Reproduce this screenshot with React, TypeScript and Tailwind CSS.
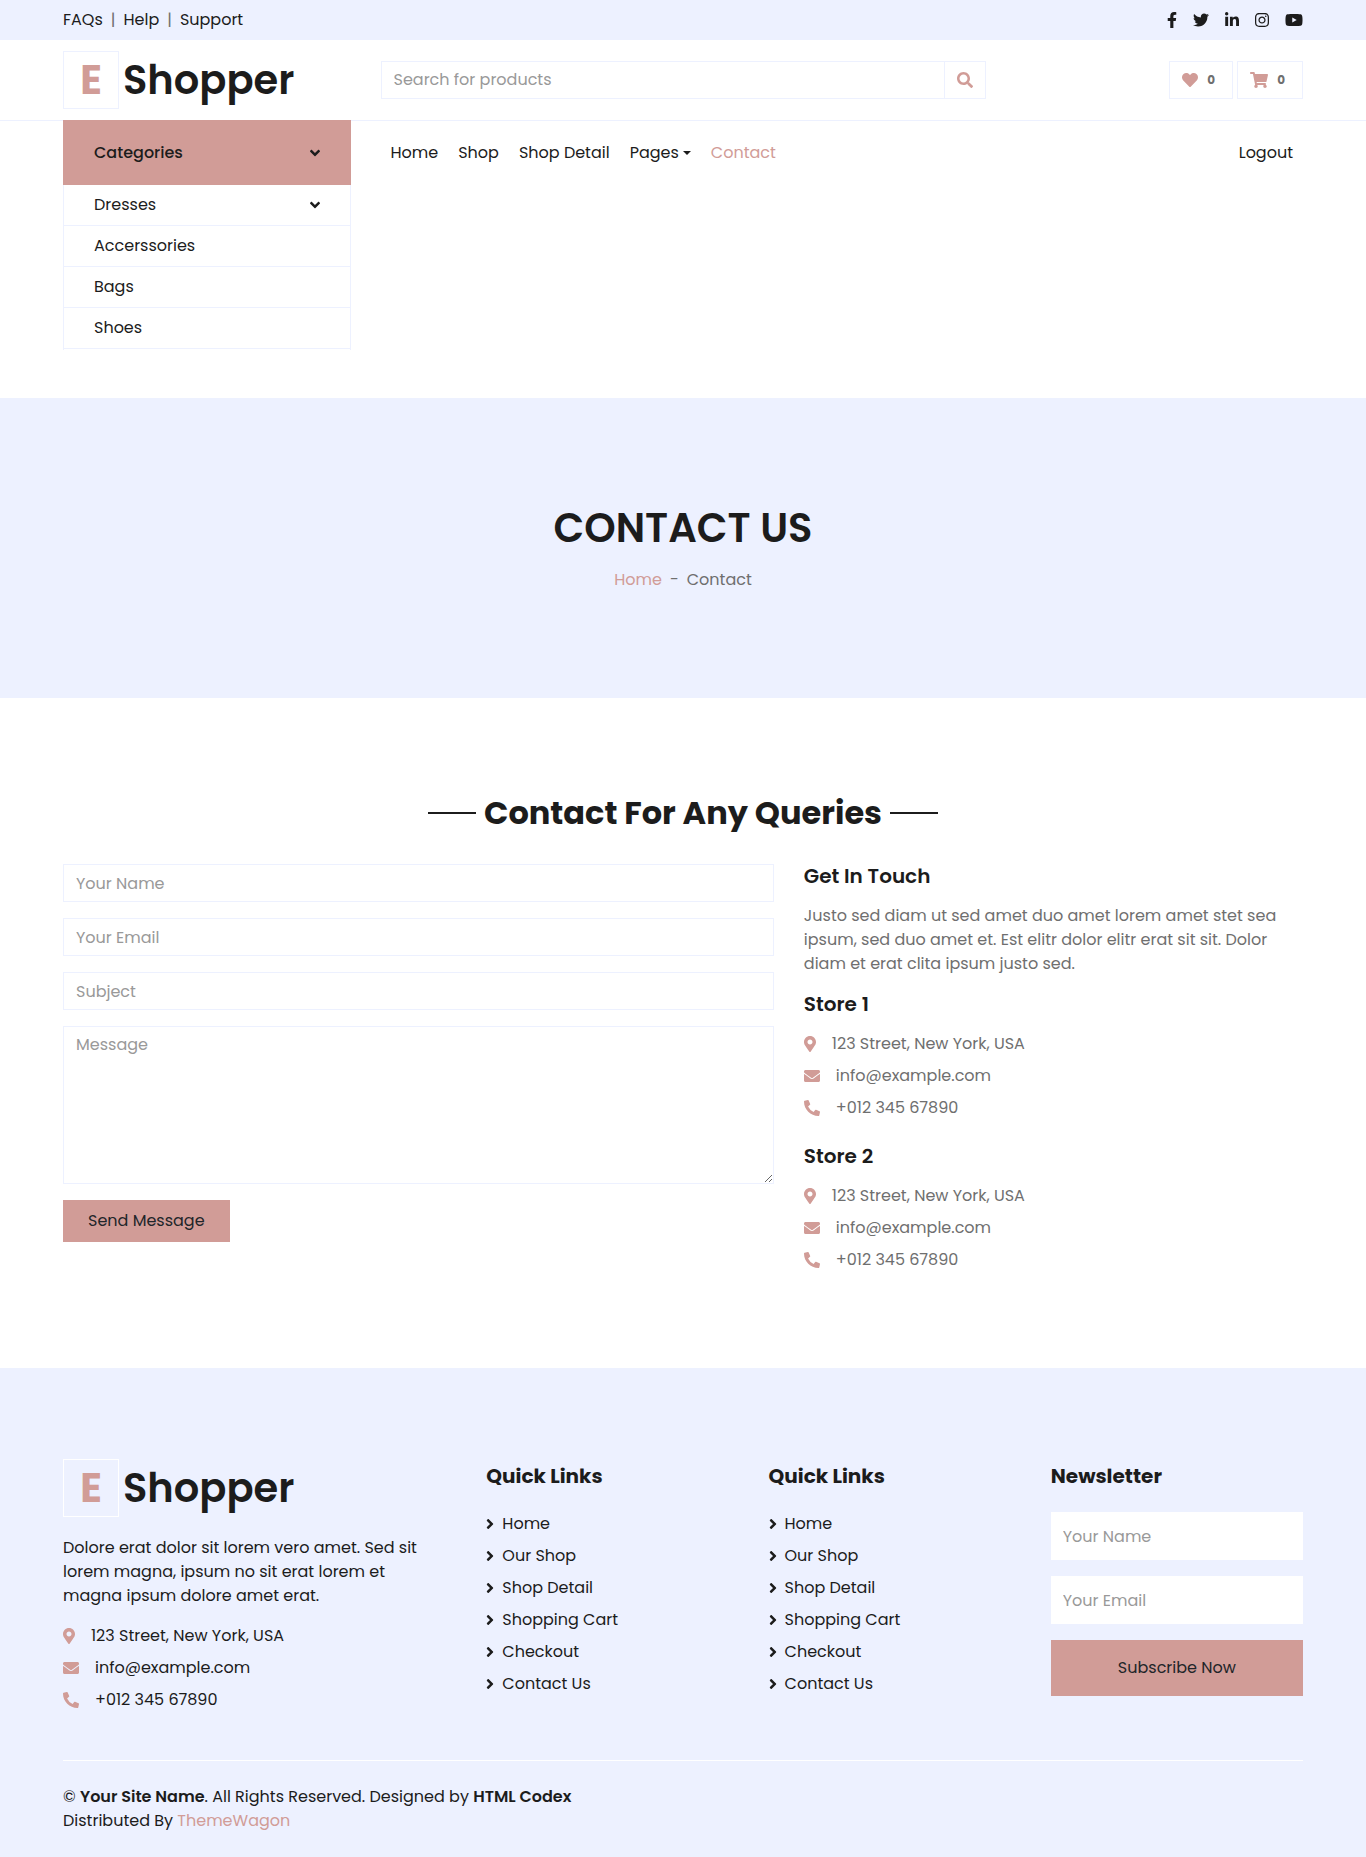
import type { ReactNode } from 'react';
import {
  FaAngleDown,
  FaAngleRight,
  FaEnvelope,
  FaFacebookF,
  FaHeart,
  FaInstagram,
  FaLinkedinIn,
  FaMapMarkerAlt,
  FaPhoneAlt,
  FaSearch,
  FaShoppingCart,
  FaTwitter,
  FaYoutube,
} from 'react-icons/fa';

const socials = [
  { label: 'Facebook', Icon: FaFacebookF, size: 'h-4 w-[10px]' },
  { label: 'Twitter', Icon: FaTwitter, size: 'h-4 w-4' },
  { label: 'LinkedIn', Icon: FaLinkedinIn, size: 'h-4 w-[14px]' },
  { label: 'Instagram', Icon: FaInstagram, size: 'h-4 w-[14px]' },
  { label: 'YouTube', Icon: FaYoutube, size: 'h-4 w-[18px]' },
];

const quickLinks = ['Home', 'Our Shop', 'Shop Detail', 'Shopping Cart', 'Checkout', 'Contact Us'];

const contactField =
  'block h-[38px] w-full border border-[#edf1ff] bg-white px-3 text-[#495057] placeholder:text-[#999999] outline-none';
const newsletterField =
  'block h-12 w-full bg-white px-3 text-[#495057] placeholder:text-[#999999] outline-none';

function Logo({ boxBorder }: { boxBorder: string }) {
  return (
    <a href="#" className="flex h-12 items-center gap-1 text-[40px] leading-none font-semibold">
      <span
        className={`flex h-[58px] w-14 shrink-0 items-center justify-center border font-bold text-[#d19c97] ${boxBorder}`}
      >
        E
      </span>
      Shopper
    </a>
  );
}

function ContactList() {
  return (
    <ul className="flex flex-col gap-2">
      <li className="flex items-center gap-4">
        <FaMapMarkerAlt className="h-4 w-3 text-[#d19c97]" />
        123 Street, New York, USA
      </li>
      <li className="flex items-center gap-4">
        <FaEnvelope className="h-4 w-4 text-[#d19c97]" />
        info@example.com
      </li>
      <li className="flex items-center gap-4">
        <FaPhoneAlt className="h-4 w-4 text-[#d19c97]" />
        +012 345 67890
      </li>
    </ul>
  );
}

function SubHeading({ children }: { children: ReactNode }) {
  return <h3 className="mb-4 text-xl leading-6 font-semibold text-[#1c1c1c]">{children}</h3>;
}

function QuickLinks() {
  return (
    <nav aria-label="Quick links">
      <h2 className="mb-6 text-xl leading-6 font-bold">Quick Links</h2>
      <ul className="flex flex-col gap-2">
        {quickLinks.map((label) => (
          <li key={label}>
            <a href="#" className="flex items-center gap-2">
              <FaAngleRight className="h-4 w-2" />
              {label}
            </a>
          </li>
        ))}
      </ul>
    </nav>
  );
}

function TopBar() {
  return (
    <div className="flex items-center justify-between bg-[#edf1ff] px-[63px] py-2 text-[#1c1c1c]">
      <div className="flex">
        <a href="#">FAQs</a>
        <span className="px-2 text-[#6f6f6f]">|</span>
        <a href="#">Help</a>
        <span className="px-2 text-[#6f6f6f]">|</span>
        <a href="#">Support</a>
      </div>
      <div className="flex items-center gap-4">
        {socials.map(({ label, Icon, size }) => (
          <a key={label} href="#" aria-label={label}>
            <Icon className={size} />
          </a>
        ))}
      </div>
    </div>
  );
}

function Header() {
  return (
    <header className="grid grid-cols-12 items-center gap-x-[30px] px-[63px] py-4">
      <div className="col-span-3 text-[#1c1c1c]">
        <Logo boxBorder="border-[#edf1ff]" />
      </div>
      <form className="col-span-6 flex h-[38px]">
        <input
          type="text"
          aria-label="Search for products"
          placeholder="Search for products"
          className="min-w-0 flex-1 border border-[#edf1ff] px-3 placeholder:text-[#999999] outline-none"
        />
        <button
          type="button"
          aria-label="Search"
          className="flex w-[41px] items-center justify-center border border-l-0 border-[#edf1ff] text-[#d19c97]"
        >
          <FaSearch className="h-4 w-4" />
        </button>
      </form>
      <div className="col-span-3 flex justify-end gap-1 text-xs font-bold">
        <a
          href="#"
          aria-label="Wishlist"
          className="flex h-[38px] items-center gap-[9px] border border-[#edf1ff] pr-[17px] pl-3"
        >
          <FaHeart className="h-4 w-4 text-[#d19c97]" />0
        </a>
        <a
          href="#"
          aria-label="Cart"
          className="flex h-[38px] items-center gap-[9px] border border-[#edf1ff] pr-[17px] pl-3"
        >
          <FaShoppingCart className="h-4 w-[18px] text-[#d19c97]" />0
        </a>
      </div>
    </header>
  );
}

function NavSection() {
  return (
    <section className="border-t border-[#edf1ff] px-[63px] text-[#1c1c1c]">
      <div className="mb-12 grid grid-cols-12 items-start gap-x-[30px]">
        <div className="col-span-3 -mt-px">
          <button
            type="button"
            className="flex h-[65px] w-full items-center justify-between bg-[#d19c97] px-[31px] font-medium"
          >
            Categories
            <FaAngleDown className="h-4 w-[10px]" />
          </button>
          <ul className="border-x border-[#edf1ff] pb-px">
            <li className="border-b border-[#edf1ff]">
              <a href="#" className="flex h-10 items-center justify-between px-[30px]">
                Dresses
                <FaAngleDown className="h-4 w-[10px]" />
              </a>
            </li>
            {['Accerssories', 'Bags', 'Shoes'].map((label) => (
              <li key={label} className="border-b border-[#edf1ff]">
                <a href="#" className="flex h-10 items-center px-[30px]">
                  {label}
                </a>
              </li>
            ))}
          </ul>
        </div>
        <nav className="col-span-9 flex h-16 items-center justify-between px-[10px]">
          <div className="flex gap-5">
            <a href="#">Home</a>
            <a href="#">Shop</a>
            <a href="#">Shop Detail</a>
            <a href="#" className="flex items-center gap-1">
              Pages
              <span className="border-x-4 border-t-4 border-x-transparent border-t-[#1c1c1c]" />
            </a>
            <a href="#" className="text-[#d19c97]">
              Contact
            </a>
          </div>
          <a href="#">Logout</a>
        </nav>
      </div>
    </section>
  );
}

function Hero() {
  return (
    <section className="flex min-h-[300px] flex-col items-center justify-center bg-[#edf1ff]">
      <h1 className="mb-4 text-[40px] leading-12 font-semibold text-[#1c1c1c] uppercase">Contact Us</h1>
      <div className="flex gap-2">
        <a href="#" className="text-[#d19c97]">
          Home
        </a>
        <span>-</span>
        <span>Contact</span>
      </div>
    </section>
  );
}

function ContactSection() {
  return (
    <main className="px-[63px] pt-24 pb-24">
      <h2 className="mb-8 flex items-center justify-center gap-2 text-[32px] leading-[38px] font-bold text-[#1c1c1c]">
        <span className="h-0.5 w-12 bg-[#1c1c1c]" />
        Contact For Any Queries
        <span className="h-0.5 w-12 bg-[#1c1c1c]" />
      </h2>
      <div className="grid grid-cols-12 items-start gap-x-[30px]">
        <form className="col-span-7 flex flex-col gap-4">
          <input type="text" aria-label="Your Name" placeholder="Your Name" className={contactField} />
          <input type="email" aria-label="Your Email" placeholder="Your Email" className={contactField} />
          <input type="text" aria-label="Subject" placeholder="Subject" className={contactField} />
          <textarea
            aria-label="Message"
            placeholder="Message"
            className="block h-[158px] w-full resize-y border border-[#edf1ff] px-3 py-1.5 text-[#495057] placeholder:text-[#999999] outline-none"
          />
          <button type="button" className="h-[42px] self-start bg-[#d19c97] px-[25px] text-[#212529]">
            Send Message
          </button>
        </form>
        <div className="col-span-5">
          <SubHeading>Get In Touch</SubHeading>
          <p className="mb-4">
            Justo sed diam ut sed amet duo amet lorem amet stet sea ipsum, sed duo amet et. Est elitr dolor
            elitr erat sit sit. Dolor diam et erat clita ipsum justo sed.
          </p>
          <SubHeading>Store 1</SubHeading>
          <div className="mb-6">
            <ContactList />
          </div>
          <SubHeading>Store 2</SubHeading>
          <ContactList />
        </div>
      </div>
    </main>
  );
}

function Footer() {
  return (
    <footer className="bg-[#edf1ff] px-[63px] pt-24 text-[#1c1c1c]">
      <div className="grid grid-cols-12 items-start gap-x-[30px] pb-12">
        <div className="col-span-4">
          <Logo boxBorder="border-white" />
          <p className="mt-6 mb-4 pr-8">
            Dolore erat dolor sit lorem vero amet. Sed sit lorem magna, ipsum no sit erat lorem et magna
            ipsum dolore amet erat.
          </p>
          <ContactList />
        </div>
        <div className="col-span-8 grid grid-cols-3 gap-x-[30px]">
          <QuickLinks />
          <QuickLinks />
          <div>
            <h2 className="mb-6 text-xl leading-6 font-bold">Newsletter</h2>
            <form className="flex flex-col gap-4">
              <input type="text" aria-label="Your Name" placeholder="Your Name" className={newsletterField} />
              <input
                type="email"
                aria-label="Your Email"
                placeholder="Your Email"
                className={newsletterField}
              />
              <button type="button" className="h-14 w-full bg-[#d19c97] text-[#212529]">
                Subscribe Now
              </button>
            </form>
          </div>
        </div>
      </div>
      <div className="border-t border-white py-6">
        <p>
          ©{' '}
          <a href="#" className="font-semibold">
            Your Site Name
          </a>
          . All Rights Reserved. Designed by{' '}
          <a href="#" className="font-semibold">
            HTML Codex
          </a>
          <br />
          Distributed By{' '}
          <a href="#" className="text-[#d19c97]">
            ThemeWagon
          </a>
        </p>
      </div>
    </footer>
  );
}

export default function App() {
  return (
    <div className="min-h-screen bg-white font-['Poppins','Inter',sans-serif] text-base leading-6 text-[#6f6f6f]">
      <TopBar />
      <Header />
      <NavSection />
      <Hero />
      <ContactSection />
      <Footer />
    </div>
  );
}
